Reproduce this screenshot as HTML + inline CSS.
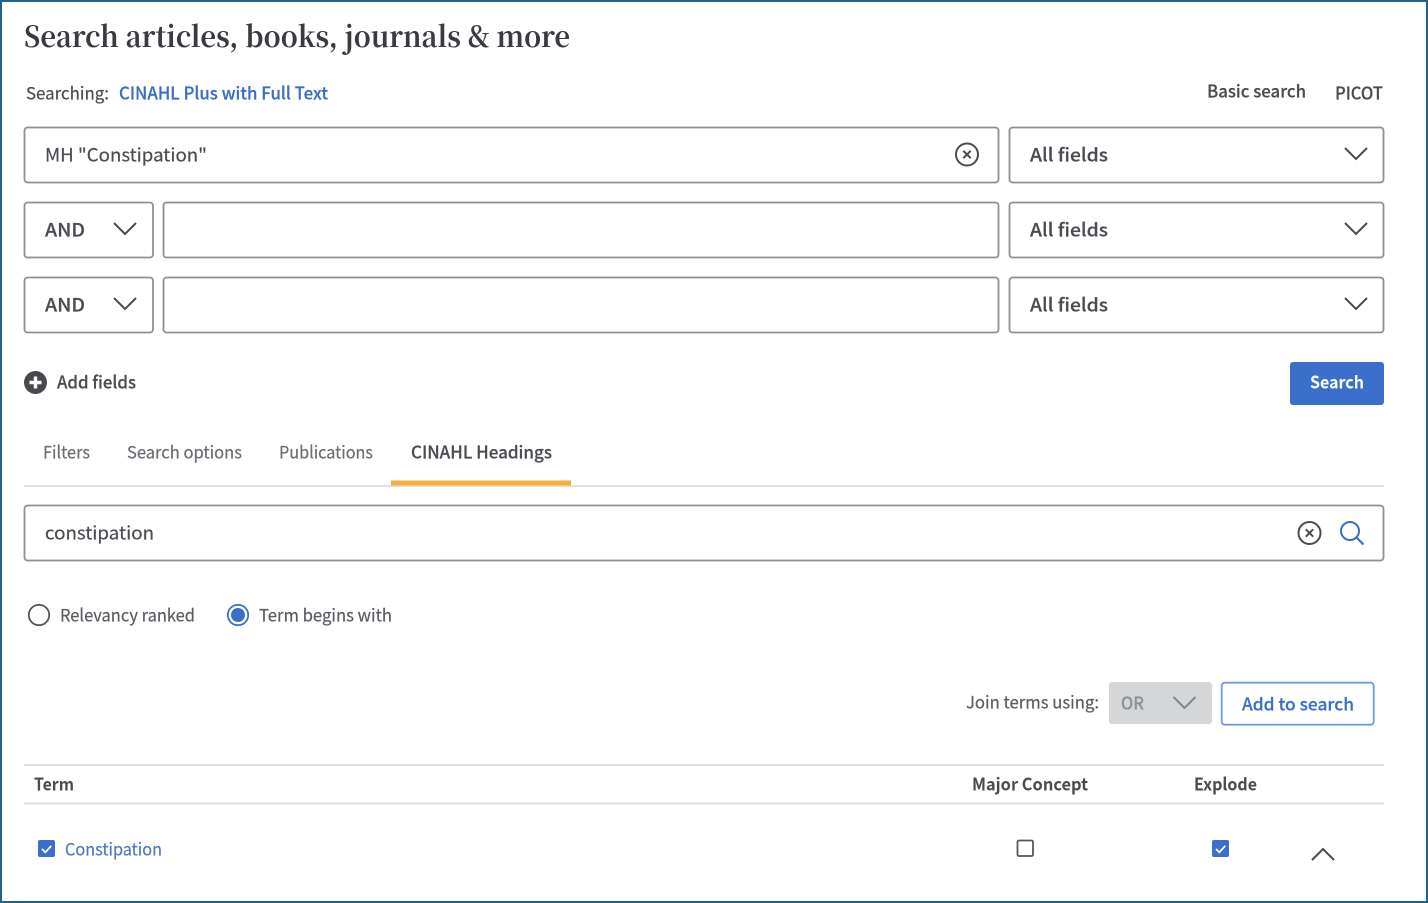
<!DOCTYPE html>
<html lang="en">
<head>
<meta charset="utf-8">
<title>Search articles, books, journals &amp; more</title>
<style>
html,body{margin:0;padding:0;background:#fff;width:1428px;height:903px;overflow:hidden}
svg{display:block;filter:blur(.35px)}
text{font-family:"Noto Sans CJK JP","Liberation Sans",sans-serif;font-size:18.3px;fill:#4a4c52;stroke:#4a4c52;stroke-width:.2px}
.h{font-family:"Noto Serif CJK SC","Liberation Serif",serif;font-size:29px;font-weight:700;fill:#3a3b40;stroke:none}
.s{font-size:17.3px}
.m{font-weight:500}
.b{font-weight:700;stroke:none}
.box{fill:#fff;stroke:#8f9095;stroke-width:1.8}
.ln{stroke:#e0e0e1;stroke-width:2}
.ic{fill:none;stroke:#4a4b50;stroke-width:2}
</style>
</head>
<body>
<svg width="1428" height="903" viewBox="0 0 1428 903" xmlns="http://www.w3.org/2000/svg">
<rect x="1" y="1" width="1426" height="901" fill="#fff" stroke="#1c6387" stroke-width="2"/>

<text class="h" x="24" y="47" textLength="546" lengthAdjust="spacingAndGlyphs">Search articles, books, journals &amp; more</text>
<text class="s" x="26" y="99.5" textLength="83" lengthAdjust="spacingAndGlyphs">Searching:</text>
<text class="s m" x="119" y="99.5" textLength="209" lengthAdjust="spacingAndGlyphs" style="fill:#3b6fc4;stroke:#3b6fc4">CINAHL Plus with Full Text</text>
<text class="s m" x="1207" y="97.5" textLength="99" lengthAdjust="spacingAndGlyphs">Basic search</text>
<text class="s m" x="1335" y="99.5" textLength="48" lengthAdjust="spacingAndGlyphs">PICOT</text>

<rect class="box" x="24.5" y="127.5" width="974" height="55" rx="3"/>
<text x="45" y="161.5" textLength="162" lengthAdjust="spacingAndGlyphs">MH "Constipation"</text>
<circle class="ic" cx="967" cy="154.5" r="11" stroke="#45464b"/>
<path class="ic" d="M963.3 150.8l7.4 7.4M970.7 150.8l-7.4 7.4" stroke-width="2.2"/>

<rect class="box" x="1009.5" y="127.5" width="374" height="55" rx="3"/>
<text class="m" x="1030" y="161.5" textLength="78" lengthAdjust="spacingAndGlyphs">All fields</text>
<path class="ic" d="M1345 148l11 11 11-11"/>

<rect class="box" x="24.5" y="202.5" width="128.5" height="55" rx="3"/>
<text class="m" x="45" y="236.5" textLength="40" lengthAdjust="spacingAndGlyphs">AND</text>
<path class="ic" d="M114 223l11 11 11-11"/>
<rect class="box" x="163.5" y="202.5" width="835" height="55" rx="3"/>
<rect class="box" x="1009.5" y="202.5" width="374" height="55" rx="3"/>
<text class="m" x="1030" y="236.5" textLength="78" lengthAdjust="spacingAndGlyphs">All fields</text>
<path class="ic" d="M1345 223l11 11 11-11"/>

<rect class="box" x="24.5" y="277.5" width="128.5" height="55" rx="3"/>
<text class="m" x="45" y="311.5" textLength="40" lengthAdjust="spacingAndGlyphs">AND</text>
<path class="ic" d="M114 298l11 11 11-11"/>
<rect class="box" x="163.5" y="277.5" width="835" height="55" rx="3"/>
<rect class="box" x="1009.5" y="277.5" width="374" height="55" rx="3"/>
<text class="m" x="1030" y="311.5" textLength="78" lengthAdjust="spacingAndGlyphs">All fields</text>
<path class="ic" d="M1345 298l11 11 11-11"/>

<circle cx="35.5" cy="382.5" r="11.5" fill="#48494f"/>
<path d="M35.5 376.5v12M29.5 382.5h12" stroke="#fff" stroke-width="3.4"/>
<text class="s m" x="57" y="388.5" textLength="79" lengthAdjust="spacingAndGlyphs">Add fields</text>
<rect x="1290" y="362" width="94" height="43" rx="3" fill="#3b6fcb"/>
<text class="s b" x="1310" y="388.5" textLength="54" lengthAdjust="spacingAndGlyphs" style="fill:#fff">Search</text>

<text class="s" x="43" y="458.5" textLength="47" lengthAdjust="spacingAndGlyphs" style="fill:#6a6c72;stroke:#6a6c72">Filters</text>
<text class="s" x="127" y="458.5" textLength="115" lengthAdjust="spacingAndGlyphs" style="fill:#6a6c72;stroke:#6a6c72">Search options</text>
<text class="s" x="279" y="458.5" textLength="94" lengthAdjust="spacingAndGlyphs" style="fill:#6a6c72;stroke:#6a6c72">Publications</text>
<text class="s m" x="411" y="458.5" textLength="141" lengthAdjust="spacingAndGlyphs">CINAHL Headings</text>
<line class="ln" x1="24" y1="486" x2="1384" y2="486"/>
<rect x="391" y="480.5" width="180" height="5" fill="#f6b03a"/>

<rect class="box" x="24.5" y="505.5" width="1359" height="55" rx="3"/>
<text x="45" y="539.5" textLength="109" lengthAdjust="spacingAndGlyphs">constipation</text>
<circle class="ic" cx="1309.5" cy="533" r="11" stroke="#45464b"/>
<path class="ic" d="M1305.8 529.3l7.4 7.4M1313.2 529.3l-7.4 7.4" stroke-width="2.2"/>
<circle cx="1350" cy="531" r="9" fill="none" stroke="#3b6fc4" stroke-width="2"/>
<path d="M1356.5 537.5l7 7" stroke="#3b6fc4" stroke-width="2.2" fill="none"/>

<circle cx="39" cy="615" r="10.2" fill="#fff" stroke="#55565b" stroke-width="1.8"/>
<text class="s" x="60" y="621.5" textLength="135" lengthAdjust="spacingAndGlyphs" style="fill:#5a5c62;stroke:#5a5c62">Relevancy ranked</text>
<circle cx="238" cy="615" r="10.2" fill="#fff" stroke="#3b6fcb" stroke-width="1.8"/>
<circle cx="238" cy="615" r="7" fill="#3b6fcb"/>
<text class="s" x="259" y="621.5" textLength="133" lengthAdjust="spacingAndGlyphs" style="fill:#5a5c62;stroke:#5a5c62">Term begins with</text>

<text class="s" x="966" y="708.5" textLength="133" lengthAdjust="spacingAndGlyphs" style="fill:#5a5c62;stroke:#5a5c62">Join terms using:</text>
<rect x="1109" y="682" width="103" height="42" rx="3" fill="#d5d6d8"/>
<text class="s m" x="1121" y="709.5" textLength="23" lengthAdjust="spacingAndGlyphs" style="fill:#8f9095;stroke:#8f9095">OR</text>
<path d="M1173.5 697l11 11 11-11" fill="none" stroke="#85868b" stroke-width="2"/>
<rect x="1221.7" y="682.7" width="152" height="42" rx="3" fill="#fff" stroke="#6f9ae0" stroke-width="1.8"/>
<text class="s m" x="1242" y="710.5" textLength="112" lengthAdjust="spacingAndGlyphs" style="fill:#3b6fc4;stroke:#3b6fc4">Add to search</text>

<line class="ln" x1="24" y1="765" x2="1384" y2="765"/>
<line class="ln" x1="24" y1="803.5" x2="1384" y2="803.5"/>
<text class="s b" x="34" y="790.5" textLength="40" lengthAdjust="spacingAndGlyphs">Term</text>
<text class="s b" x="972" y="790.5" textLength="116" lengthAdjust="spacingAndGlyphs">Major Concept</text>
<text class="s b" x="1194" y="790.5" textLength="63" lengthAdjust="spacingAndGlyphs">Explode</text>

<rect x="38" y="840" width="17" height="17" rx="2" fill="#3b6fcb"/>
<path d="M42 849l3.3 3.3 6-6.5" fill="none" stroke="#fff" stroke-width="1.8"/>
<text class="s" x="65" y="855.5" textLength="97" lengthAdjust="spacingAndGlyphs" style="fill:#4d78c8;stroke:#4d78c8">Constipation</text>
<rect x="1017.5" y="840.5" width="15.5" height="15.5" rx="1.5" fill="#fff" stroke="#55565b" stroke-width="1.8"/>
<rect x="1212" y="840" width="17" height="17" rx="2" fill="#3b6fcb"/>
<path d="M1216 849l3.3 3.3 6-6.5" fill="none" stroke="#fff" stroke-width="1.8"/>
<path class="ic" d="M1312 860l11-11 11 11"/>
</svg>
</body>
</html>
